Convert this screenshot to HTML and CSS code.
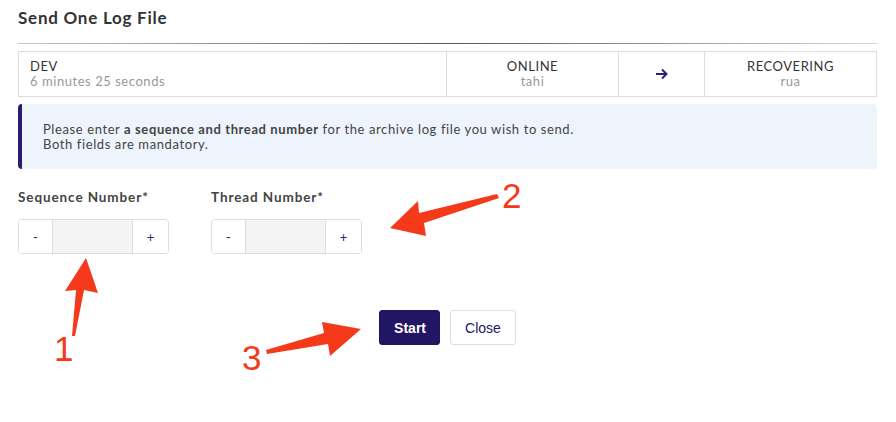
FILE: index.html
```html
<!DOCTYPE html>
<html lang="en">
<head>
    <meta charset="UTF-8">
    <meta name="viewport" content="width=device-width, initial-scale=1.0">
    <title>Send One Log File</title>
    <link rel="stylesheet" href="styles.css">
</head>
<body>
    <div class="dialog">
        <h3 class="title">Send One Log File</h3>
        <div class="rule"></div>
        <div class="status">
            <div class="cell cell-main">
                <div class="name">DEV</div>
                <div class="sub">6 minutes 25 seconds</div>
            </div>
            <div class="cell cell-db">
                <div class="name">ONLINE</div>
                <div class="sub">tahi</div>
            </div>
            <div class="cell cell-arrow">
                <svg width="14" height="12" viewBox="0 0 14 12"><path d="M1 6h11M7 1.5l4.5 4.5L7 10.5" fill="none" stroke="#2b2170" stroke-width="2"/></svg>
            </div>
            <div class="cell cell-db">
                <div class="name">RECOVERING</div>
                <div class="sub">rua</div>
            </div>
        </div>
        <div class="info">
            Please enter <b>a sequence and thread number</b> for the archive log file you wish to send.<br>
            Both fields are mandatory.
        </div>
        <div class="fields">
            <div class="field">
                <label class="label">Sequence Number*</label>
                <div class="stepper">
                    <button class="step">-</button>
                    <input class="num" type="text">
                    <button class="step">+</button>
                </div>
            </div>
            <div class="field">
                <label class="label">Thread Number*</label>
                <div class="stepper">
                    <button class="step">-</button>
                    <input class="num" type="text">
                    <button class="step">+</button>
                </div>
            </div>
        </div>
        <div class="actions">
            <button class="btn btn-primary">Start</button>
            <button class="btn">Close</button>
        </div>
    </div>

    <svg class="marks" width="896" height="422" viewBox="0 0 896 422">
        <g fill="#f43a1b">
            <polygon points="86,258 98,293 84,290 75,336 72,336 76,290 65,291"/>
            <polygon points="390,228 418,201 419,213 497,194 499,198 424,223 426,236"/>
            <polygon points="361,329 330,356 328,344 267,354 266,350 324,333 322,322"/>
        </g>
        <g class="mark-num" fill="#f43a1b">
            <text x="54" y="361">1</text>
            <text x="502" y="208">2</text>
            <text x="242" y="370">3</text>
        </g>
    </svg>
</body>
</html>
```

FILE: styles.css
```css
body {
    margin: 0;
    font-family: Lato, "Noto Sans", sans-serif;
    color: #333;
    background: #fff;
    letter-spacing: 0.55px;
}
.dialog {
    padding: 8px 19px 0 18px;
}
.title {
    margin: 0;
    font-size: 17px;
    line-height: 20px;
    font-weight: 700;
    letter-spacing: 0.75px;
    color: #333;
}
.rule {
    height: 1px;
    margin-top: 15px;
    background: linear-gradient(to right, #c8c8c8, #555 50%, #d8d8d8);
}
.status {
    display: flex;
    margin-top: 7px;
    height: 46px;
    border: 1px solid #ddd;
    box-sizing: border-box;
}
.cell {
    display: flex;
    flex-direction: column;
    justify-content: center;
    font-size: 13px;
    line-height: 15px;
}
.cell + .cell {
    border-left: 1px solid #ddd;
}
.cell-main {
    flex: 1;
    padding-left: 11px;
}
.cell-db {
    width: 171px;
    align-items: center;
}
.cell-arrow {
    width: 85px;
    align-items: center;
}
.name {
    color: #333;
}
.sub {
    color: #999;
}
.info {
    margin-top: 7px;
    height: 65px;
    box-sizing: border-box;
    padding: 18px 0 0 21px;
    background: #eef4fb;
    border-left: 4px solid #2b1d6b;
    border-radius: 4px;
    font-size: 13px;
    line-height: 15px;
    letter-spacing: 0.6px;
    color: #444;
}
.fields {
    display: flex;
    gap: 42px;
    margin-top: 20px;
}
.field {
    display: flex;
    flex-direction: column;
    width: 151px;
}
.label {
    font-size: 13.5px;
    line-height: 16px;
    font-weight: 700;
    letter-spacing: 0.9px;
    color: #444;
    margin-bottom: 14px;
    white-space: nowrap;
}
.stepper {
    display: flex;
    height: 35px;
    border: 1px solid #ddd;
    border-radius: 4px;
    box-sizing: border-box;
    overflow: hidden;
}
.step {
    width: 33px;
    border: 0;
    background: #fff;
    font-family: Lato, sans-serif;
    font-size: 13px;
    color: #2b2170;
    padding: 0;
}
.step + .num {
    border-left: 1px solid #ddd;
}
.num {
    width: 79px;
    border: 0;
    border-right: 1px solid #ddd;
    background: #f4f4f4;
    padding: 0;
    outline: none;
}
.num + .step {
    width: 35px;
}
.actions {
    display: flex;
    justify-content: center;
    gap: 10px;
    margin-top: 56px;
}
.btn {
    height: 35px;
    padding: 0 14px;
    border: 1px solid #ddd;
    border-radius: 3px;
    background: #fff;
    color: #221564;
    font-family: "Liberation Sans", Arial, sans-serif;
    font-size: 14px;
    letter-spacing: 0;
}
.btn-primary {
    width: 61px;
    border-color: #221564;
    background: #221564;
    color: #fff;
    font-weight: 700;
}
.marks {
    position: absolute;
    left: 0;
    top: 0;
    pointer-events: none;
}
.mark-num {
    font-family: "Liberation Sans", Arial, sans-serif;
    font-size: 35px;
    letter-spacing: 0;
}
```
